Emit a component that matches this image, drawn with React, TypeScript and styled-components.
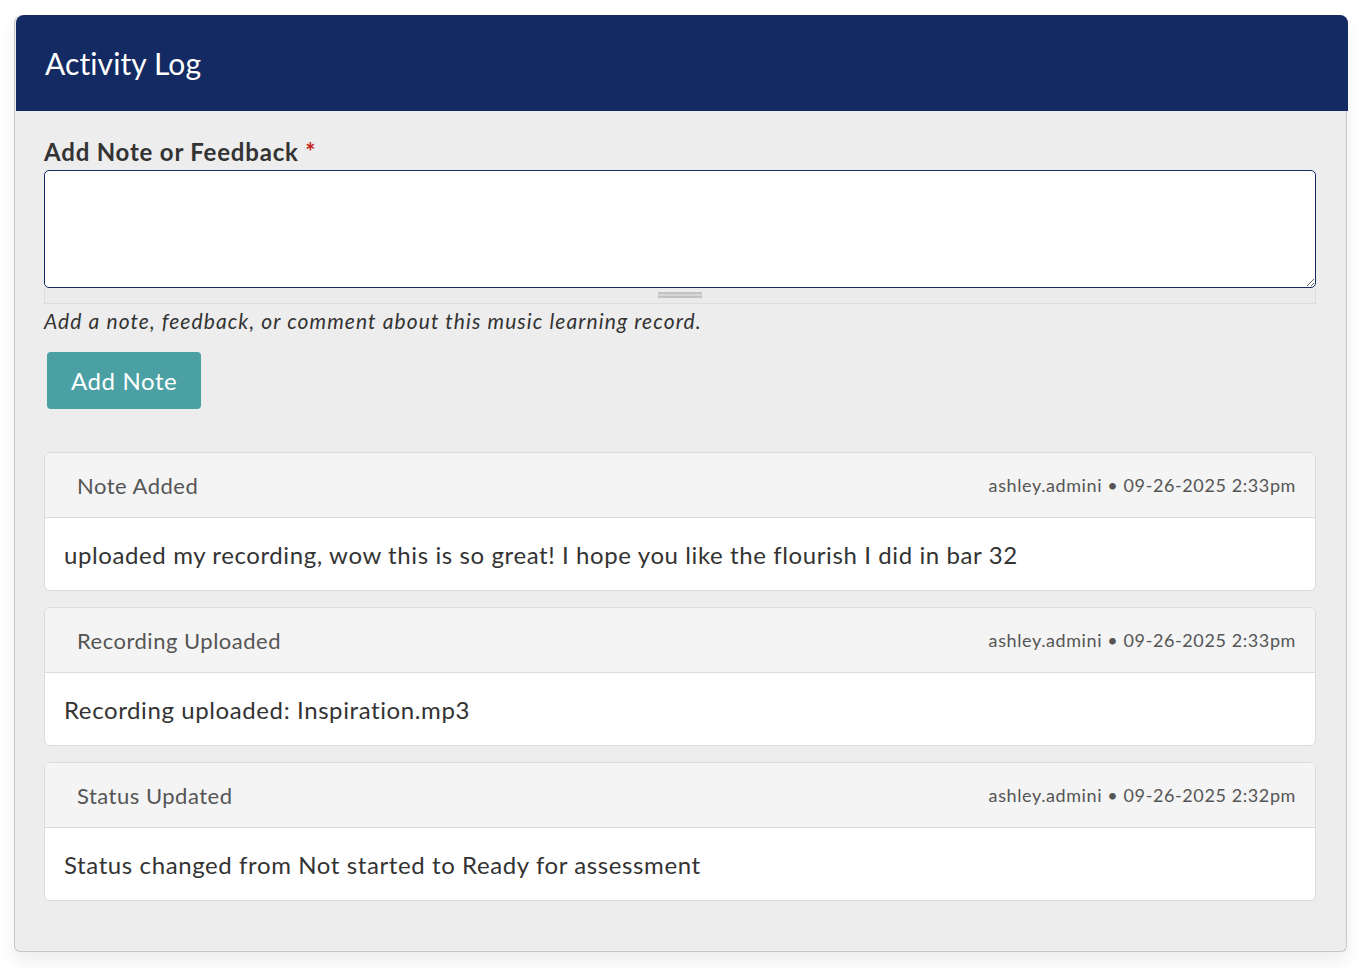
import styled, { createGlobalStyle } from "styled-components";

const GlobalStyle = createGlobalStyle`
    html, body {
        margin: 0;
        padding: 0;
        background: #ffffff;
        font-family: "Lato", "Noto Sans", sans-serif;
    }
    * {
        box-sizing: border-box;
    }
`;

type LogEntry = {
    id: number;
    title: string;
    user: string;
    date: string;
    body: string;
};

const entries: LogEntry[] = [
    {
        id: 1,
        title: "Note Added",
        user: "ashley.admini",
        date: "09-26-2025 2:33pm",
        body: "uploaded my recording, wow this is so great! I hope you like the flourish I did in bar 32",
    },
    {
        id: 2,
        title: "Recording Uploaded",
        user: "ashley.admini",
        date: "09-26-2025 2:33pm",
        body: "Recording uploaded: Inspiration.mp3",
    },
    {
        id: 3,
        title: "Status Updated",
        user: "ashley.admini",
        date: "09-26-2025 2:32pm",
        body: "Status changed from Not started to Ready for assessment",
    },
];

const LogCard = ({ entry }: { entry: LogEntry }) => {
    return (
        <LogCardBlock>
            <div className="head">
                <h4>{entry.title}</h4>
                <span>
                    {entry.user} • {entry.date}
                </span>
            </div>
            <div className="body">{entry.body}</div>
        </LogCardBlock>
    );
};

const App = () => {
    return (
        <Page>
            <GlobalStyle />
            <Panel>
                <PanelHeader>
                    <h2>Activity Log</h2>
                </PanelHeader>
                <PanelBody>
                    <FieldLabel>
                        Add Note or Feedback <em>*</em>
                    </FieldLabel>
                    <NoteInput />
                    <Grippie>
                        <span />
                    </Grippie>
                    <HelpText>Add a note, feedback, or comment about this music learning record.</HelpText>
                    <AddButton type="button">Add Note</AddButton>
                    <LogList>
                        {entries.map((entry) => (
                            <LogCard key={entry.id} entry={entry} />
                        ))}
                    </LogList>
                </PanelBody>
            </Panel>
        </Page>
    );
};

const Page = styled.div`
    padding: 15px 19px 17px 14px;
`;

const Panel = styled.section`
    background: #ededed;
    border: 1px solid #c6c6c6;
    border-top: none;
    border-radius: 8px 8px 6px 6px;
    box-shadow: 0 10px 18px rgba(0, 0, 0, 0.07);
`;

const PanelHeader = styled.div`
    height: 96px;
    margin: 0 -2px 0 1px;
    background: #132b62;
    border-radius: 8px 8px 0 0;
    display: flex;
    align-items: center;
    padding-left: 29px;
    >h2 {
        margin: 0;
        color: #ffffff;
        font-size: 30px;
        font-weight: 400;
        letter-spacing: 0.1px;
    }
`;

const PanelBody = styled.div`
    padding: 26px 30px 50px 29px;
`;

const FieldLabel = styled.label`
    display: block;
    font-size: 24px;
    font-weight: 700;
    letter-spacing: 0.8px;
    color: #333333;
    margin-bottom: 4px;
    >em {
        font-style: normal;
        color: #c4201c;
    }
`;

const NoteInput = styled.textarea`
    display: block;
    width: 100%;
    height: 118px;
    border: 1px solid #132b62;
    border-radius: 5px;
    background: #ffffff;
    resize: vertical;
    font-family: inherit;
    font-size: 18px;
    outline: none;
`;

const Grippie = styled.div`
    height: 16px;
    border: 1px solid #dddddd;
    border-top: none;
    background: #ebebeb;
    display: flex;
    justify-content: center;
    padding-top: 4px;
    >span {
        width: 44px;
        height: 6px;
        border-top: 2px solid #c2c2c2;
        border-bottom: 2px solid #c2c2c2;
        position: relative;
        &::after {
            content: "";
            position: absolute;
            left: 0;
            right: 0;
            top: 0;
            height: 2px;
            background: #d6d6d6;
        }
    }
`;

const HelpText = styled.p`
    margin: 4px 0 0;
    font-size: 21px;
    font-style: italic;
    letter-spacing: 1.1px;
    color: #333333;
`;

const AddButton = styled.button`
    margin: 19px 0 0 3px;
    height: 57px;
    padding: 0 24px;
    background: #4aa0a3;
    border: none;
    border-radius: 4px;
    color: #ffffff;
    font-family: inherit;
    font-size: 24px;
    letter-spacing: 0.6px;
    cursor: pointer;
`;

const LogList = styled.div`
    margin-top: 43px;
    display: flex;
    flex-direction: column;
    gap: 16px;
`;

const LogCardBlock = styled.div`
    border: 1px solid #dcdcdc;
    border-radius: 6px;
    background: #ffffff;
    overflow: hidden;
    >.head {
        height: 65px;
        background: #f4f4f4;
        border-bottom: 1px solid #dcdcdc;
        display: flex;
        align-items: center;
        justify-content: space-between;
        padding: 0 19px 0 32px;
        >h4 {
            margin: 0;
            font-size: 22px;
            font-weight: 400;
            letter-spacing: 0.5px;
            color: #555555;
        }
        >span {
            font-size: 18px;
            letter-spacing: 0.6px;
            color: #555555;
        }
    }
    >.body {
        height: 72px;
        display: flex;
        align-items: center;
        padding: 0 19px;
        font-size: 24px;
        letter-spacing: 0.6px;
        color: #333333;
    }
`;

export default App;
